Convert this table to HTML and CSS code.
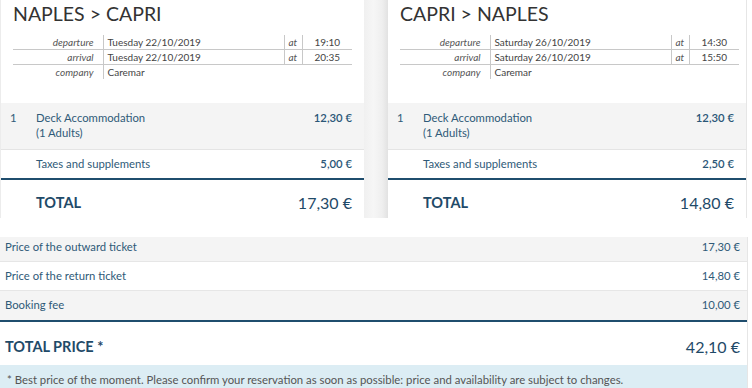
FILE: index.html
```html
<!DOCTYPE html>
<html lang="en">
<head>
<meta charset="utf-8">
<title>Booking summary</title>
<link rel="stylesheet" href="styles.css">
</head>
<body>
<div class="page">
  <div class="legs">
    <section class="leg">
      <h2 class="leg-title">NAPLES &gt; CAPRI</h2>
      <table class="sched">
        <colgroup><col class="c-lbl"><col class="c-date"><col class="c-at"><col class="c-time"></colgroup>
        <tr class="bordered"><td class="lbl">departure</td><td class="date">Tuesday 22/10/2019</td><td class="at">at</td><td class="time">19:10</td></tr>
        <tr class="bordered"><td class="lbl">arrival</td><td class="date">Tuesday 22/10/2019</td><td class="at">at</td><td class="time">20:35</td></tr>
        <tr><td class="lbl">company</td><td class="date" colspan="3">Caremar</td></tr>
      </table>
      <div class="item shaded">
        <span class="qty">1</span>
        <span class="desc">Deck Accommodation<br>(1 Adults)</span>
        <span class="amt">12,30 €</span>
      </div>
      <div class="item taxes">
        <span class="qty"></span>
        <span class="desc">Taxes and supplements</span>
        <span class="amt">5,00 €</span>
      </div>
      <div class="leg-total">
        <span class="qty"></span>
        <span class="desc">TOTAL</span>
        <span class="amt">17,30 €</span>
      </div>
    </section>
    <div class="gutter"></div>
    <section class="leg">
      <h2 class="leg-title">CAPRI &gt; NAPLES</h2>
      <table class="sched">
        <colgroup><col class="c-lbl"><col class="c-date"><col class="c-at"><col class="c-time"></colgroup>
        <tr class="bordered"><td class="lbl">departure</td><td class="date">Saturday 26/10/2019</td><td class="at">at</td><td class="time">14:30</td></tr>
        <tr class="bordered"><td class="lbl">arrival</td><td class="date">Saturday 26/10/2019</td><td class="at">at</td><td class="time">15:50</td></tr>
        <tr><td class="lbl">company</td><td class="date" colspan="3">Caremar</td></tr>
      </table>
      <div class="item shaded">
        <span class="qty">1</span>
        <span class="desc">Deck Accommodation<br>(1 Adults)</span>
        <span class="amt">12,30 €</span>
      </div>
      <div class="item taxes">
        <span class="qty"></span>
        <span class="desc">Taxes and supplements</span>
        <span class="amt">2,50 €</span>
      </div>
      <div class="leg-total">
        <span class="qty"></span>
        <span class="desc">TOTAL</span>
        <span class="amt">14,80 €</span>
      </div>
    </section>
  </div>
  <div class="summary">
    <div class="sum-row shaded first"><span>Price of the outward ticket</span><span class="amt">17,30 €</span></div>
    <div class="sum-row"><span>Price of the return ticket</span><span class="amt">14,80 €</span></div>
    <div class="sum-row shaded last"><span>Booking fee</span><span class="amt">10,00 €</span></div>
    <div class="sum-total"><span>TOTAL PRICE *</span><span class="amt">42,10 €</span></div>
    <div class="note">* Best price of the moment. Please confirm your reservation as soon as possible: price and availability are subject to changes.</div>
  </div>
</div>
</body>
</html>
```

FILE: styles.css
```css
html, body {
  margin: 0;
  padding: 0;
  background: #fff;
}
body {
  font-family: Lato, "Open Sans", sans-serif;
  color: #2f5a78;
  width: 752px;
  height: 388px;
  overflow: hidden;
}
.page {
  width: 752px;
}
.legs {
  display: grid;
  grid-template-columns: 364px 24px 364px;
  height: 218px;
}
.gutter {
  background: linear-gradient(to right, #f0f0f0 0%, #f6f6f6 40%, #efefef 75%, #e2e2e2 100%);
}
.leg {
  display: flex;
  flex-direction: column;
  border-left: 1px solid #ececec;
}
.leg:last-child {
  border-left: none;
  border-right: 1px solid #e6e6e6;
  margin-right: 5px;
}
.leg-title {
  margin: 0;
  padding: 2px 0 0 12px;
  height: 35px;
  box-sizing: border-box;
  font-size: 19.5px;
  font-weight: normal;
  color: #333;
  line-height: 24px;
}
.sched {
  margin: 0 12px 0 12px;
  width: 339px;
  table-layout: fixed;
  border-collapse: collapse;
  font-size: 10px;
  color: #444;
  line-height: 13px;
}
.c-lbl { width: 90px; }
.c-at { width: 18px; }
.c-time { width: 50px; }
.sched td {
  padding: 0;
  height: 14px;
  white-space: nowrap;
}
.sched tr.bordered td {
  border-bottom: 1px solid #c8c8c8;
}
.sched .lbl {
  text-align: right;
  font-style: italic;
  color: #555;
  border-right: 1px solid #c8c8c8;
  padding-right: 9px;
}
.sched .date {
  padding-left: 4px;
}
.sched .at {
  font-style: italic;
  color: #555;
  padding-left: 4px;
  border-left: 1px solid #c8c8c8;
  border-right: 1px solid #c8c8c8;
}
.sched .time {
  text-align: center;
}
.item, .leg-total {
  display: grid;
  grid-template-columns: 26px 1fr auto;
  padding: 0 12px 0 9px;
  font-size: 11.3px;
  line-height: 15px;
}
.item.shaded {
  margin-top: 24px;
  background: #f4f4f4;
  padding-top: 7px;
  padding-bottom: 9px;
  border-bottom: 1px solid #e4e4e4;
  height: 30px;
}
.item.taxes {
  padding-top: 6px;
  height: 22px;
  border-bottom: 2px solid #1f4d6d;
}
.item .amt {
  font-weight: 600;
  color: #2a5677;
}
.leg-total {
  align-items: center;
  height: 36px;
  padding-top: 9px;
  box-sizing: border-box;
  color: #1f4a68;
}
.leg-total .desc {
  font-size: 14.5px;
  font-weight: bold;
}
.leg-total .amt {
  font-size: 16px;
}
.summary {
  margin-top: 19px;
  width: 747px;
  border-right: 1px solid #e6e6e6;
  font-size: 11.3px;
}
.sum-row {
  display: flex;
  justify-content: space-between;
  align-items: flex-start;
  height: 29px;
  box-sizing: border-box;
  padding: 7px 7px 0 5px;
  line-height: 14px;
  border-bottom: 1px solid #e6e6e6;
  color: #2f5a78;
}
.sum-row.first {
  height: 25px;
  padding-top: 3px;
}
.sum-row.shaded {
  background: #f4f4f4;
}
.sum-row.last {
  height: 31px;
  border-bottom: 2px solid #1f4d6d;
}
.sum-total {
  display: flex;
  justify-content: space-between;
  align-items: center;
  height: 43px;
  padding: 5px 7px 0 5px;
  box-sizing: border-box;
  color: #1f4a68;
  font-size: 14.5px;
  font-weight: bold;
}
.sum-total .amt {
  font-size: 16px;
  font-weight: normal;
}
.note {
  background: #dcedf4;
  color: #555;
  font-size: 11.35px;
  padding: 8px 7px 6px 7px;
  height: 30px;
  box-sizing: border-box;
}
```
